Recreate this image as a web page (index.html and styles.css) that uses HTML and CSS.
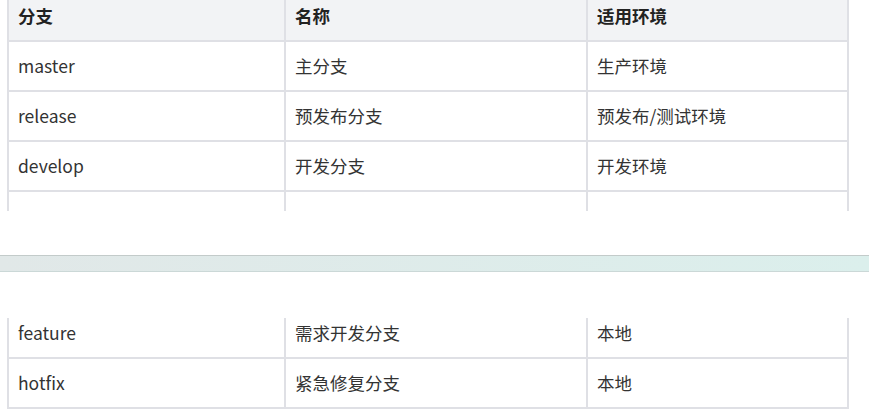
FILE: index.html
```html
<!DOCTYPE html>
<html lang="zh-CN">
<head>
<meta charset="utf-8">
<title>分支</title>
<link rel="stylesheet" href="styles.css">
</head>
<body>
<div class="page page-top">
  <table class="tbl tbl-top">
    <colgroup><col class="c1"><col class="c2"><col class="c3"></colgroup>
    <thead>
      <tr><th>分支</th><th>名称</th><th>适用环境</th></tr>
    </thead>
    <tbody>
      <tr><td>master</td><td>主分支</td><td>生产环境</td></tr>
      <tr><td>release</td><td>预发布分支</td><td>预发布/测试环境</td></tr>
      <tr><td>develop</td><td>开发分支</td><td>开发环境</td></tr>
      <tr><td>&nbsp;</td><td>&nbsp;</td><td>&nbsp;</td></tr>
    </tbody>
  </table>
</div>
<div class="page-break"></div>
<div class="page page-bottom">
  <table class="tbl tbl-bottom">
    <colgroup><col class="c1"><col class="c2"><col class="c3"></colgroup>
    <tbody>
      <tr><td>feature</td><td>需求开发分支</td><td>本地</td></tr>
      <tr><td>hotfix</td><td>紧急修复分支</td><td>本地</td></tr>
    </tbody>
  </table>
</div>
</body>
</html>
```
FILE: styles.css
```css
html, body {
  margin: 0;
  padding: 0;
  background: #ffffff;
}
body {
  font-family: "Noto Sans CJK SC", "Noto Sans", sans-serif;
  font-size: 17.5px;
  color: #333333;
  width: 869px;
  height: 419px;
  overflow: hidden;
}
.page {
  overflow: hidden;
}
.page-top {
  height: 211px;
}
.page-bottom {
  margin-top: 46px;
  height: 100px;
}
.tbl {
  border-collapse: collapse;
  table-layout: fixed;
  width: 840px;
  margin-left: 7px;
}
.c1 { width: 277px; }
.c2 { width: 302px; }
.c3 { width: 261px; }
.tbl th, .tbl td {
  border: 2px solid #dfe0e5;
  height: 48px;
  padding: 0 9px;
  text-align: left;
  vertical-align: middle;
  line-height: 24px;
  white-space: nowrap;
}
.tbl th {
  background: #f2f3f5;
  font-weight: 700;
  color: #222222;
}
.tbl-top {
  margin-top: -10px;
}
.tbl-bottom {
  margin-top: -11px;
}
.page-break {
  margin-top: 44px;
  height: 15px;
  border-top: 1px solid #c3cbca;
  border-bottom: 1px solid #cbd8d7;
  background: linear-gradient(to right, #e1e8e8, #dbefec);
}
```
